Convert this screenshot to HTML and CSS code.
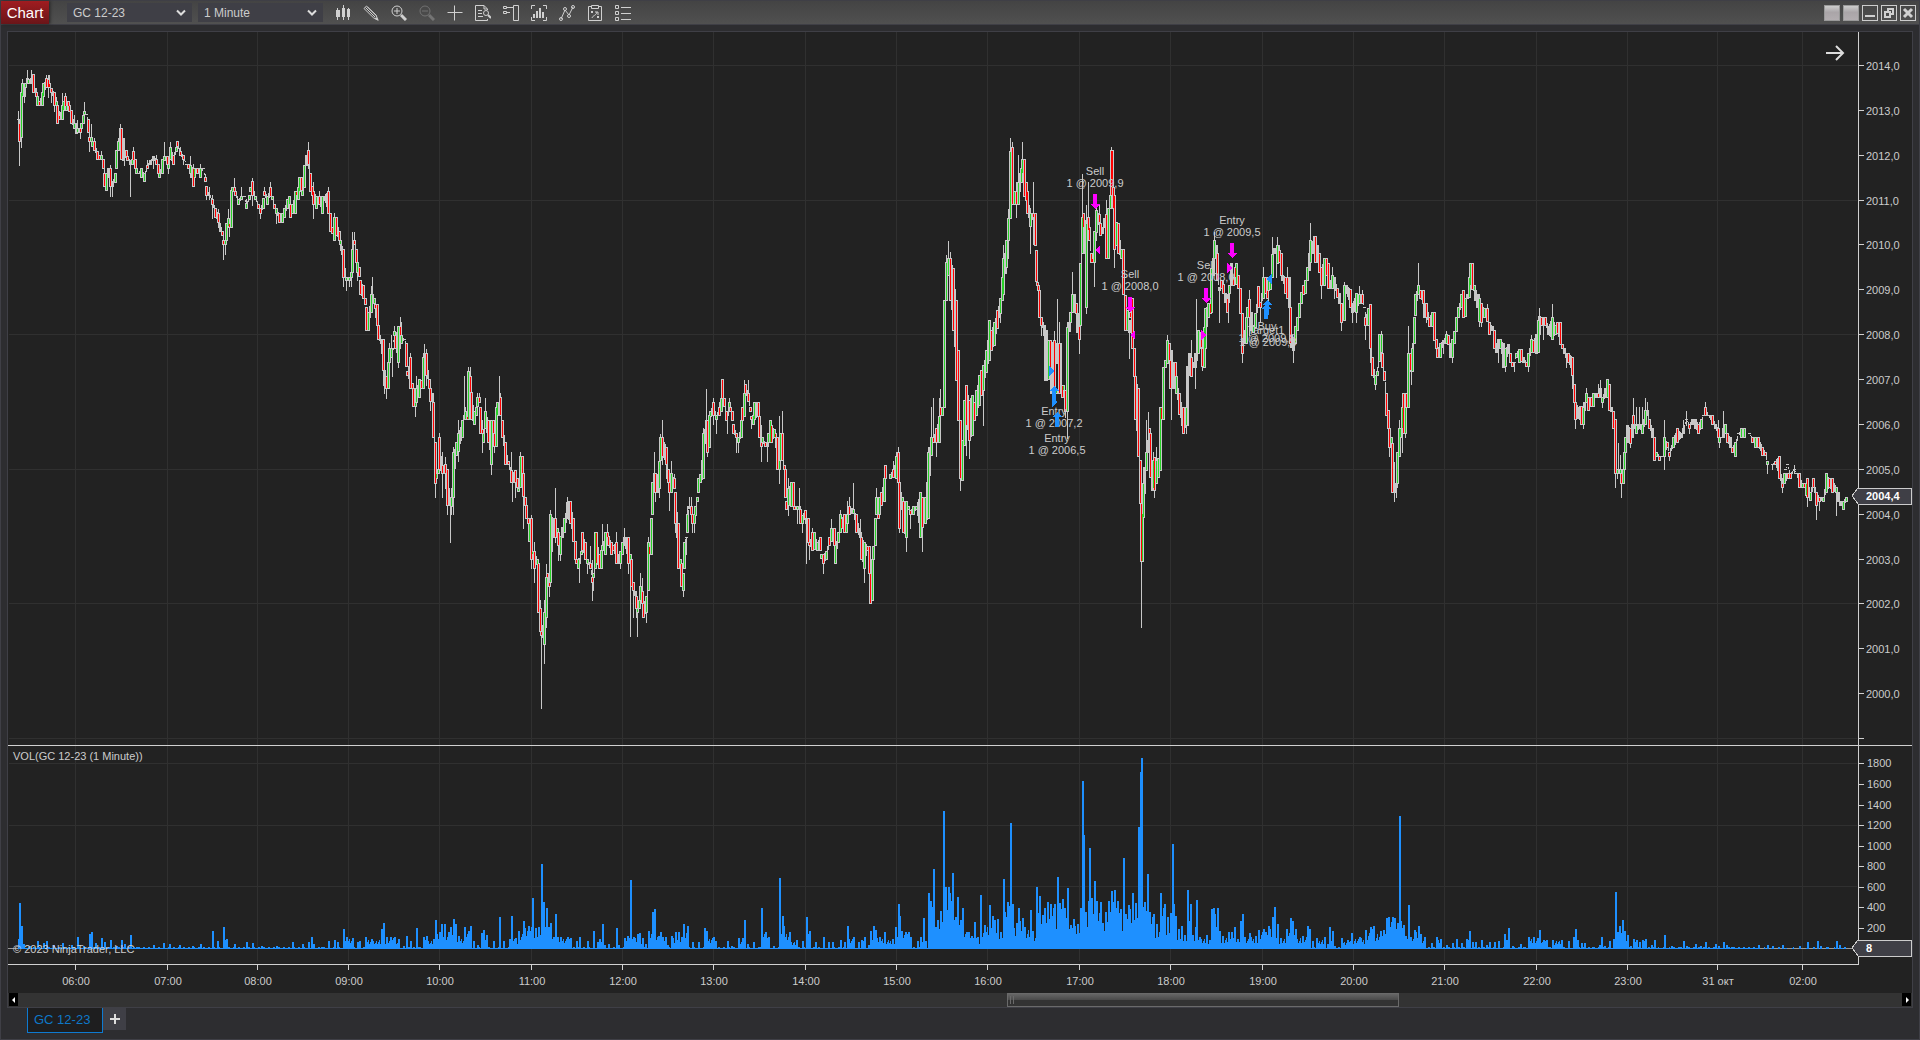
FILE: index.html
```html
<!DOCTYPE html>
<html lang="en">
<head>
    <meta charset="UTF-8">
    <meta name="viewport" content="width=device-width, initial-scale=1.0">
    <link rel="stylesheet" href="styles.css">
    <title>Chart</title>
</head>
<body>
    <div class="window">
        <header class="toolbar">
            <h1 class="title">Chart</h1>
            <label class="combo">
                <select name="instrument" aria-label="Instrument">
                    <option>GC 12-23</option>
                </select>
                <svg width="10" height="8" viewBox="0 0 10 8"><path d="M1 1.5 L5 5.5 L9 1.5"/></svg>
            </label>
            <label class="combo">
                <select name="interval" aria-label="Interval">
                    <option>1 Minute</option>
                </select>
                <svg width="10" height="8" viewBox="0 0 10 8"><path d="M1 1.5 L5 5.5 L9 1.5"/></svg>
            </label>
            <nav class="tools">
                <button type="button" title="Chart style">
                    <svg viewBox="0 0 16 16"><path class="solid" d="M1 5h4v7h-4zM2 3h1v12h-1zM7 3h3v9h-3zM8 0h1v15h-1zM12 4h3v8h-3zM13 3h1v12h-1z"/></svg>
                </button>
                <button type="button" title="Drawing tools">
                    <svg viewBox="0 0 16 16"><path d="M1 3.5L3.5 1L13 10L15 15L10.5 12.8ZM2.5 2.5L12 12M4.5 2L13 10.5"/><path class="solid" d="M13 12l3 4l-4-2z"/></svg>
                </button>
                <button type="button" title="Zoom in">
                    <svg viewBox="0 0 16 16"><circle cx="6" cy="6" r="5"/><path d="M3 6h6M6 3v6"/><path class="thick" d="M10 10L15 15"/></svg>
                </button>
                <button type="button" title="Zoom out" disabled>
                    <svg viewBox="0 0 16 16"><circle cx="6" cy="6" r="5"/><path d="M3 6h6"/><path class="thick" d="M10 10L15 15"/></svg>
                </button>
                <button type="button" title="Crosshair">
                    <svg viewBox="0 0 16 16"><path d="M0.5 7.5h15M7.5 0.5v15"/></svg>
                </button>
                <button type="button" title="Data box">
                    <svg viewBox="0 0 16 16"><path d="M12.5 5V4L9 0.5H0.5v15h12V14M9 0.5V4h3M3 5.5h4M3 8.5h4M3 11.5h5"/><circle cx="11" cy="8" r="2.5"/><path d="M13 10l3 3" stroke-width="2"/></svg>
                </button>
                <button type="button" title="Chart trader">
                    <svg viewBox="0 0 16 16"><path d="M0.5 1.5h3v2h-3zM0.5 6.5h3v2h-3zM10.5 0.5h5v15h-5zM4 2.5h6M4 7.5h3"/></svg>
                </button>
                <button type="button" title="Indicators">
                    <svg viewBox="0 0 16 16"><path d="M4 0.5H0.5V4M12 0.5h3.5V4M4 15.5H0.5V12M12 15.5h3.5V12"/><path class="solid" d="M2 9h2v4h-2zM5 6h2v7h-2zM8 3h2v10h-2zM11 7h2v6h-2z"/></svg>
                </button>
                <button type="button" title="Strategies">
                    <svg viewBox="0 0 16 16"><path d="M2 14L6 5L10 10L14 2"/><circle cx="2" cy="14" r="1.5"/><circle cx="6" cy="4" r="1.5"/><circle cx="10" cy="11" r="1.5"/><circle cx="14" cy="2" r="1.5"/></svg>
                </button>
                <button type="button" title="Strategy performance">
                    <svg viewBox="0 0 16 16"><path d="M4 1.5H1.5v14h13v-14H12M4.5 0.5h7v3h-7zM4 6l2 2M6 6L4 8M10 11l2 2M12 11l-2 2M5 13c1-3 4-2 5-6M8 7h3v3"/></svg>
                </button>
                <button type="button" title="Properties">
                    <svg viewBox="0 0 16 16"><path d="M0.5 0.5h3v3h-3zM0.5 6.5h3v3h-3zM0.5 12.5h3v3h-3zM6 2.5h10M6 8.5h10M6 14.5h10"/></svg>
                </button>
            </nav>
            <div class="window-buttons">
                <button type="button" class="link-button" aria-label="Instrument link"></button>
                <button type="button" class="link-button" aria-label="Interval link"></button>
                <button type="button" aria-label="Minimize"><svg viewBox="0 0 14 14"><path class="solid" d="M2 9h10v2h-10z"/></svg></button>
                <button type="button" aria-label="Restore"><svg viewBox="0 0 14 14"><path stroke-width="2" d="M6 5V3h5v5H9M3 6h5v5H3z"/></svg></button>
                <button type="button" aria-label="Close"><svg viewBox="0 0 14 14"><path stroke-width="3" d="M3 3l8 8M11 3l-8 8"/></svg></button>
            </div>
        </header>
        <main class="frame">
            <div class="chart-area">
                <svg id="chart"></svg>
                <button type="button" class="go-last" aria-label="Go to last bar">
                    <svg width="19" height="16" viewBox="0 0 19 16"><path d="M0 8H17M10 1L17 8L10 15"/></svg>
                </button>
            </div>
            <div class="scrollbar">
                <button type="button" aria-label="Scroll left"><svg width="4" height="6" viewBox="0 0 4 6"><path d="M3 0v6L0 3z"/></svg></button>
                <div class="track"><div class="thumb"></div></div>
                <button type="button" aria-label="Scroll right"><svg width="4" height="6" viewBox="0 0 4 6"><path d="M1 0v6L4 3z"/></svg></button>
            </div>
        </main>
        <footer class="tabs">
            <a class="tab" href="#chart">GC 12-23</a>
            <button type="button" class="add-tab" aria-label="New tab"><svg width="10" height="10" viewBox="0 0 10 10"><path d="M0 5h10M5 0v10"/></svg></button>
        </footer>
    </div>
    <script src="chart.js"></script>
</body>
</html>
```

FILE: styles.css
```css
* {
    box-sizing: border-box;
}

body {
    margin: 0;
    background: #2d2d30;
    color: #ccc;
    font-family: "Liberation Sans", Arial, sans-serif;
    font-size: 12px;
}

button {
    margin: 0;
    padding: 0;
    border: 0;
    background: none;
    color: inherit;
}

.window {
    display: flex;
    flex-direction: column;
    height: 100vh;
    border: 1px solid #3f3f46;
}

/* Toolbar */
.toolbar {
    display: flex;
    align-items: center;
    gap: 6px;
    height: 24px;
    padding-right: 3px;
    border-bottom: 1px solid #3f3f46;
    background: linear-gradient(#444, #505050);
}

.title {
    width: 48px;
    height: 23px;
    margin: 0 12px 0 0;
    background: linear-gradient(#a01c20, #6a1519);
    box-shadow: 1px 0 3px #222;
    color: #fff;
    font-size: 15px;
    font-weight: normal;
    line-height: 23px;
    text-align: center;
}

.combo {
    display: grid;
    align-items: center;
    width: 125px;
    height: 19px;
    background: #3f3f46;
}

.combo select,
.combo svg {
    grid-area: 1 / 1;
}

.combo select {
    width: 100%;
    height: 19px;
    padding: 0 6px;
    border: 0;
    appearance: none;
    background: none;
    color: #ccc;
    font: inherit;
}

.combo svg {
    justify-self: end;
    margin-right: 6px;
    fill: none;
    stroke: #ddd;
    stroke-width: 2;
    pointer-events: none;
}

.tools {
    display: flex;
    flex: 1;
}

.tools button {
    display: grid;
    place-items: center;
    width: 28px;
    height: 22px;
}

.tools svg,
.window-buttons svg {
    width: 16px;
    height: 16px;
    fill: none;
    stroke: #d0d0d0;
}

.tools button:disabled {
    opacity: 0.3;
}

.tools .solid,
.window-buttons .solid {
    fill: #d0d0d0;
    stroke: none;
}

.tools .thick {
    stroke-width: 3;
}

.window-buttons {
    display: flex;
    gap: 3px;
}

.window-buttons button {
    display: grid;
    place-items: center;
    width: 16px;
    height: 16px;
    border: 1px solid #ccc;
}

.window-buttons svg {
    width: 14px;
    height: 14px;
}

.window-buttons .link-button {
    border-color: #999;
    background: linear-gradient(#ccc, #aaa5a8 45%, #b2adb0);
}

/* Chart */
.frame {
    display: flex;
    flex: 1;
    flex-direction: column;
    min-height: 0;
    margin: 6px 6px 0;
    border: 1px solid #3f3f46;
    background: #222;
}

.chart-area {
    position: relative;
    flex: 1;
    min-height: 0;
}

#chart {
    display: block;
    width: 100%;
    height: 100%;
    font-size: 11px;
    shape-rendering: crispEdges;
}

#chart text {
    fill: #ccc;
}

#chart .middle {
    text-anchor: middle;
}

#chart .tag-text {
    fill: #fff;
    font-weight: bold;
}

.grid { fill: #303030; }
.axis { fill: #d0d0d0; }
.zero { fill: #999; }
.outline { fill: #c8c8c8; }
.down { fill: #f00; }
.up { fill: #28d228; }
.volume { fill: #1e90ff; }
.short { fill: #f0f; }
.long { fill: #1e90ff; }

.tag {
    fill: #3f3f46;
    stroke: #ccc;
}

.go-last {
    position: absolute;
    top: 13px;
    right: 67px;
    height: 16px;
}

.go-last svg {
    display: block;
    fill: none;
    stroke: #ddd;
    stroke-width: 2;
}

/* Scrollbar */
.scrollbar {
    display: flex;
    height: 14px;
    padding: 0 1px 1px;
    background: #333;
}

.scrollbar button {
    display: grid;
    place-items: center;
    width: 9px;
    background: #000;
    fill: #fff;
}

.track {
    flex: 1;
}

.thumb {
    width: 20.8%;
    height: 14px;
    margin-left: 52.5%;
    border: 1px solid #6a6a6a;
    background:
        linear-gradient(90deg, transparent 2px, #6a6a6a 2px 3px, transparent 3px 5px, #6a6a6a 5px 6px, transparent 6px) 0 2px / 100% 8px no-repeat,
        linear-gradient(#666, #4a4a4a 50%, #333 50%);
}

/* Tabs */
.tabs {
    display: flex;
    height: 31px;
    padding-left: 26px;
}

.tab {
    width: 76px;
    height: 25px;
    padding-left: 6px;
    border: 1px solid #0e7ad1;
    border-top: 0;
    background: #1e1e1f;
    color: #0e78c8;
    font-size: 13px;
    line-height: 23px;
    text-decoration: none;
}

.add-tab {
    display: grid;
    place-items: center;
    width: 23px;
    height: 22px;
    background: #3f3f46;
    stroke: #ddd;
    stroke-width: 2;
}
```

FILE: chart.js
```js
// Base size of the drawing area; everything is scaled from it
const BASE_WIDTH = 1904;
const BASE_HEIGHT = 961;
const AXIS_WIDTH = 53;
const LEFT = 8;
const TOP = 32;

// Bars: x, body top, body bottom, direction, wick top, wick bottom (- = no wick)
const segments = [
    { x: 0, y: 60, scaleX: 3, scaleY: 3, bars: `
55 178 178 n 153 190|58 190 243 r 178 315|65 97 232 g - 260|68 70 108 g 57|74 70 108 n - 125|76 70 80 g|83 55 70 n 30|86 56 68 g|94 55 70 n 30|100 43 96 r|106 83 96 n|109 96 108 r 84|113 108 135 g 97|118 124 135 r|127 96 135 g 84|131 70 108 g|139 55 81 r 45|145 56 81 r 45 110|148 70 82 r 45|154 83 96 r - 125|163 97 135 r - 152|169 123 136 g 112|173 136 190 r|179 165 178 r 153|187 136 178 g 98|190 124 150 g|196 109 137 r 98|199 136 150 g|205 124 137 r|208 136 152 r|214 151 190 r|223 190 204 g 165|229 190 218 n|233 204 216 g 180|241 204 216 r 190 233|244 190 204 g|250 165 190 g|254 152 163 g 126|260 163 163 n|265 178 217 r|268 232 244 r 190 272|274 232 244 g 192|278 244 259 g|283 244 270 r 235|293 272 297 r|299 285 298 r|305 285 297 g 272|310 298 325 r|314 340 378 r 325|319 340 391 g|326 325 350 n|330 325 378 r 315 407|337 364 379 n - 407|346 340 365 g|350 270 325 g|355 244 270 g 235|361 205 240 n 192|364 205 297 r|370 235 300 n|373 285 290 n - 315|379 271 287 r|382 287 300 r|391 300 313 n - 408|397 297 312 g 285|400 272 299 r 262|406 298 325 r|409 325 339 g|416 339 339 n|424 325 350 g|433 340 364 g|443 315 324 r 300|451 300 312 n|460 287 300 n - 325|469 298 312 r 285|475 312 340 r|478 340 352 g|487 297 339 g|493 287 300 g 246|502 287 312 r|505 313 325 g - 340|511 260 297 g 246|520 285 312 r|529 260 272 g|532 244 258 r|541 272 286 r 260|550 286 298 r - 312|559 312 312 n|565 313 325 r|572 315 340 g 288 352|580 325 378 r 312|583 325 350 g|592 325 340 r|600 325 350 g 312|610 325 325 n|617 352 364 r 342|619 379 405 r - 418|628 405 405 n 380 418|637 418 432 r 405 473|646 445 471 r|655 460 486 r 447 500|661 500 514 n 488|667 514 526 r|671 540 553 r 525 597|676 540 552 g - 582|679 488 540 g|686 473 498 g 447|688 488 500 r - 527|694 390 500 g|697 380 392 g|703 380 392 r 354|706 392 404 r|715 418 432 g|724 407 417 g 380|733 407 407 n|740 430 445 g 418|748 405 418 g|751 380 392 g|757 364 405 r 354 434|766 407 418 g|775 433 445 r|782 445 460 r - 473|790 415 445 g|794 392 405 r 380|802 407 432 g|811 380 407 r 366|817 407 418 g|823 432 444 r|829 445 460 g - 488|838 460 487 r|848 460 487 g|854 445 472 g|862 418 445 g|868 407 432 g|872 433 472 r|878 433 460 g|886 392 460 g|890 392 405 r|895 380 418 g|899 352 392 g|905 352 390 r|908 390 405 g|914 314 380 g|920 285 314 n|925 271 313 r 246 325|931 340 392 r|937 378 405 r|941 392 432 r 366 473|950 407 444 g|958 407 432 r 392|967 407 460 g|974 407 420 n|985 392 460 r 380|991 460 514 r|996 500 520 r|1003 472 541 g 460|1010 472 526 r|1018 514 540 r|1021 541 553 g - 570|1030 568 650 r - 678|1039 650 660 g - 690|1048 650 660 g - 678|1054 635 650 g - 678|1057 568 635 g 515|1063 541 552 r 515|1069 568 607 r|1072 607 635 g - 660|1078 622 648 r|1081 660 703 r|1090 676 715 r|1096 715 731 r|1099 742 810 r|1106 757 810 g|1114 703 757 g 678|1117 703 715 n 650|1124 715 730 g|1126 731 743 r - 770|1132 731 796 r|1135 796 838 r|1144 838 850 n - 878|1150 838 930 r|1153 930 975 n - 998|1159 947 985 r - 1013|1165 905 985 g|1168 865 905 g 850|1175 865 892 g 825|1178 865 868 n - 948|1184 812 824 g 797|1187 824 865 r|1195 797 905 g - 920|1201 797 824 r 770 865|1205 824 850 g 785|1213 838 838 n|1219 850 918 r|1222 933 945 r|1231 892 985 r 880|1237 970 985 r|1240 985 1038 r|1247 1025 1038 g - 1067|1250 985 1025 g 947|1258 958 1010 g|1264 960 984 r|1270 892 985 g|1273 878 890 n 852|1279 878 945 r 868 975|1288 958 985 r|1291 985 1023 r - 1050|1297 1000 1023 n|1300 1025 1132 r|1306 1147 1268 r - 1310|1310 1240 1255 g|1316 1228 1240 g|1319 1132 1228 r 1120|1327 1215 1240 r 1177 1310|1336 1213 1240 r 1190 1283|1342 1228 1335 r - 1363` },
    { x: 450, y: 340, scaleX: 3, scaleY: 3, bars: `
1 470 495 n - 605|4 470 497 g 445 523|11 335 470 g 322 523|19 307 345 g|26 280 333 g 240 362|37 240 292 g|43 225 238 n 108|47 212 238 g 200|52 227 238 r|56 92 238 g 81|62 107 157 r 81|65 157 238 r|73 212 252 g|80 200 225 g|83 172 198 g 160|89 172 185 r 160|91 200 280 r|97 267 280 r 240 335|100 280 307 g|106 212 265 g 175|115 240 307 r|124 240 373 g - 402|130 240 280 r|134 280 318 r - 335|139 200 318 g|143 185 225 g|149 185 200 n 108|152 172 225 r 160|157 240 292 r|166 307 373 r|175 362 373 r|184 390 427 r 337|187 400 427 n - 482|196 390 427 r - 470|202 415 440 r|206 443 454 g|211 347 440 g 337|217 347 400 r|220 400 468 r - 563|226 470 496 r|230 496 535 r|235 535 548 r|238 550 603 g|244 535 658 r 525 685|247 632 643 g|253 632 685 r 607 725|262 658 672 g|265 670 817 r|271 805 872 r 780|274 872 885 r - 1103|283 817 912 g 780 968|289 712 832 g 672 860|293 698 712 r|298 725 738 r - 767|301 523 725 g 510|310 535 590 n|316 535 590 r 443 605|322 563 577 g|326 577 615 r - 660|331 588 643 g - 660|337 560 590 n|343 535 577 g|352 485 535 n 472|361 482 548 r|370 535 603 r|376 603 658 r|379 658 670 r|385 658 685 g|388 655 668 n - 725|394 632 643 g|397 577 630 r|406 605 658 r|413 658 670 g - 698|421 670 685 r 618|428 712 725 r 660 780|431 698 712 g - 750|437 577 685 g|440 577 670 r|447 643 685 r|455 630 685 g|457 615 630 g 552|466 577 643 g|472 577 590 r 552|475 588 615 r|484 605 643 r|490 615 630 r|499 605 670 r 577|504 643 670 n|511 632 670 g - 685|517 605 643 g|523 590 615 n 563|535 590 668 r - 698|541 643 658 g - 887|545 658 738 r|550 725 750 r - 832|559 767 805 r 752 832|562 805 817 g - 887|568 780 805 g|572 738 780 g 698|578 752 790 r 715|581 790 832 r|589 767 817 g - 845|595 605 750 g 590|598 617 643 r|604 535 643 g|607 427 523 g|613 400 427 n 335|616 400 455 r - 482|622 402 455 n|628 362 443 g - 470|631 292 360 g 282|637 292 347 r 240 373|649 320 373 r - 415|655 388 427 r|659 427 455 r - 510|664 400 455 g 362|673 415 443 r 402|676 455 548 r - 577|685 548 685 r|691 658 672 g|694 670 738 r|700 698 750 g - 767|703 605 685 g|709 590 590 n - 643|712 523 577 g 497|718 497 503 n 472|724 497 523 r 472|727 523 548 r - 577|733 523 548 g - 577|736 497 525 g|742 470 482 g|745 415 455 g|751 402 427 g|760 280 415 g 265|769 240 260 n 147|772 240 335 r - 347|778 225 320 g|782 212 227 g|790 185 225 r 175 252|799 225 238 g - 280|808 200 225 r 187|814 173 212 g|817 118 173 r|823 173 198 r|829 212 240 r|832 212 225 n - 280|838 187 200 g 175|841 200 212 r|847 212 240 r|850 252 280 r|859 280 292 r - 335|866 292 307 g - 335|874 240 292 g|877 200 240 r|883 160 227 g 120|886 133 160 r|895 158 183 r 120|901 200 212 r|904 227 238 r - 265|911 225 252 g|914 185 238 g|925 185 227 r|928 227 292 r|934 305 318 r 255 362|937 292 307 g|946 307 318 r|952 305 318 n - 362|955 280 305 g|961 240 305 g|965 255 305 r|973 267 292 g|976 280 290 r - 320|982 292 388 r|988 360 388 g 227 428|991 280 360 g|997 280 360 r 213|1002 375 388 r|1006 388 470 r|1009 482 508 r|1016 443 495 g 415 525|1025 427 497 g|1030 427 497 r|1033 497 508 r|1041 497 508 g - 550|1048 497 508 n 443|1051 508 550 r|1057 525 548 g - 577|1066 510 535 r|1069 535 550 n - 670|1075 535 605 r|1078 605 615 r - 658|1088 577 630 r 563|1093 577 628 g|1102 605 630 g|1111 590 630 r|1115 643 655 g|1120 643 670 r - 698|1130 632 658 g|1139 590 615 r|1145 563 603 g 537|1153 563 615 r|1156 615 670 g|1165 577 605 g|1172 523 577 g 510|1174 535 563 r|1183 523 577 r|1190 550 577 g|1192 523 548 g 482|1199 497 523 r 470|1210 508 520 g 430|1219 523 577 r|1231 577 590 n 537|1234 590 658 r|1243 605 685 g - 725|1252 617 630 r|1258 617 700 r|1261 700 790 r|1267 658 780 g|1270 617 658 g|1276 535 615 g|1279 470 523 g 443|1285 523 535 r|1288 470 523 g|1294 455 495 r|1303 415 482 g|1306 375 415 r|1321 402 415 g|1330 388 412 r 362|1339 347 415 g 335|1345 335 427 r 320|1348 427 563 r - 577|1357 470 483 g|1361 482 577 r|1369 482 590 g - 632|1375 497 508 g|1381 510 522 r - 563|1390 497 522 g|1399 497 508 g|1411 455 590 g|1417 470 560 r - 632|1426 470 548 g|1435 335 535 g 320|1443 292 345 g 200|1450 292 305 r 175|1460 265 305 r - 347|1468 227 305 g 175|1471 200 225 r 148|1477 200 225 g` },
    { x: 0, y: 0, scaleX: 1, scaleY: 1, bars: `
944 300 407 g|946 262 300 g 255|948 258 275 g 241|950 258 300 r 252|953 268 330 r|956 300 380 r|958 350 420 r|960 420 478 r - 490|962 440 480 g|964 400 445 g|966 385 425 r - 455|969 400 440 r - 458|972 395 435 g|974 402 420 r|976 390 415 g|979 375 405 g|981 370 395 r|983 365 390 g - 425|986 350 372 g|989 320 360 g|991 330 350 r|994 322 345 g|997 310 328 r` },
    { x: 1000, y: 130, scaleX: 3, scaleY: 3, bars: `
2 505 550 g - 575|8 440 510 g|11 385 492 g 345|17 370 430 n|20 330 412 g|25 265 330 g 238 385|32 62 265 g 24|37 50 222 r 36|42 182 222 g|49 182 222 r 155 262|55 155 222 g 75|58 130 182 n|64 115 157 g|67 87 130 g 36|73 87 197 r|79 157 210 r|83 182 250 r|91 248 288 g 235 370|99 250 262 r 155 342|106 250 344 r|109 360 452 r|112 455 464 r|115 464 480 r|119 480 560 r|125 560 585 r - 615|133 585 615 n - 750|139 600 750 n|146 630 748 g|151 630 735 r|155 640 790 n|164 630 780 r 603|168 780 790 g|172 640 700 n 508|178 640 790 r 577|182 640 770 n|187 765 802 r|190 765 780 g|196 780 842 r - 860|203 590 842 g 577 925|208 577 603 n|212 545 577 g|218 492 545 g 427|224 492 545 n|229 520 548 r|233 548 605 n|238 588 627 r - 668|242 400 585 g|248 262 370 g 132|251 250 290 r|260 278 532 g 225 548|265 262 300 r 155|269 290 330 r|274 370 395 r|278 385 395 r|282 304 395 g - 467|290 240 305 g 225 330|299 252 275 r 225|301 278 315 r|307 290 308 n|313 265 290 n|320 252 384 r 210|326 235 384 g|332 195 235 g|335 60 195 r 50|337 60 170 r|340 170 235 r|344 195 358 r - 412|349 275 345 g|355 278 370 r|364 358 385 g|370 358 492 r|376 495 600 r|382 540 600 g|387 570 605 n - 683|391 545 560 r|397 505 655 r|403 655 738 r|406 738 868 r|415 775 977 r|421 990 1120 r|424 1120 1293 r - 1491|427 1150 1293 g|430 1060 1160 g|434 1010 1090 n|440 965 1020 g 870|445 930 965 n 845|448 895 910 r|452 910 1040 r|456 1000 1080 n|460 990 1075 g 965|464 980 1080 r - 1100|470 990 1060 g 950|475 985 1040 g|478 985 1020 n|482 830 1020 g|485 830 868 r|490 710 868 g|496 690 710 g|502 630 700 g 615|508 640 690 r|512 690 775 r|515 660 775 n - 868|520 695 775 n|526 695 738 r|529 738 790 g|537 790 852 r|546 830 885 n - 910|550 830 908 r|559 830 885 g - 910|562 708 885 n|568 670 735 n|575 680 738 r 630|580 695 710 n|587 670 712 n - 775|590 670 690 n 508|595 600 670 g|604 610 650 r|608 655 708 r - 720|614 590 710 g|617 535 655 g|625 520 560 g|631 520 550 r|634 415 545 g|640 385 435 n|644 330 385 g 305|650 345 370 n|653 370 450 r|658 470 480 n - 575|664 450 475 r|670 463 490 r 450|676 490 515 n|682 505 545 r|685 492 515 n - 575|688 465 490 g|694 400 465 n|700 440 465 r|706 412 440 r|710 398 462 g|715 435 475 r|721 475 548 r|727 548 668 r - 695|733 600 640 n|740 560 640 g|742 530 560 g|747 507 560 r 480 615|753 545 600 n|760 585 605 g|766 548 590 g|775 467 530 r|781 515 530 r - 575|790 440 505 g 412|796 440 490 r|802 480 505 r|805 440 480 g - 535|811 440 478 g|817 372 440 g 320|823 355 370 n|829 358 370 n - 440|832 345 400 g 320|838 360 397 r 345|844 370 435 r|847 435 450 n|855 440 490 r|860 455 480 n|862 440 505 r 412|868 440 530 n|872 530 640 r|875 615 650 n|880 628 660 n - 695|887 587 640 g|892 560 600 g|899 520 560 g|903 485 520 g|910 465 492 r|916 450 490 g|922 410 450 g|928 370 420 n|931 330 395 g 280|937 332 370 n|943 318 330 n|946 318 395 r|952 345 395 n|958 370 425 r|964 410 465 r - 505|973 385 465 g|978 385 435 r|985 400 475 r|991 450 475 n|997 435 475 g 410|1003 440 475 n - 505|1012 475 500 r|1018 490 520 n|1024 520 575 r - 600|1028 520 555 n|1034 465 570 g 455|1040 465 490 n|1050 478 530 r|1057 520 545 n - 575|1068 490 545 g - 575` },
    { x: 1300, y: 200, scaleX: 2.703, scaleY: 3, bars: `
162 283 310 g 258|168 283 310 r 270|173 322 322 n|178 350 375 r 337 418|184 325 375 g|190 312 445 r - 486|197 472 525 r|204 525 553 g - 566|210 512 525 g 500|216 403 483 g|219 403 455 g 392|224 458 500 r|228 512 540 r|233 578 645 r|238 630 685 r|243 685 740 r - 767|247 712 728 g|250 728 875 r|255 850 875 n 785 902|261 848 862 n - 890|264 755 848 g|268 685 767 g 660|273 685 712 g|276 620 685 g - 755|281 578 700 r|285 620 700 g - 712|289 578 620 r|293 458 620 g 378|298 458 510 r|301 485 512 n - 553|304 445 512 g 430|309 350 430 g|313 283 345 g|320 256 283 g 190|327 270 295 r|333 270 310 r|337 310 350 n|343 310 350 r - 365|350 350 377 r|358 337 377 g|363 337 420 r|369 418 445 r|373 445 472 r|380 430 470 g|388 420 430 n - 458|396 403 430 g 392|402 405 432 r|407 430 470 n|412 418 472 g - 486|418 392 430 g|424 350 392 g|429 322 350 g|436 283 320 g|441 270 350 r|448 295 348 g|453 283 295 n|458 230 290 g|462 188 256 g|466 188 268 r|472 256 270 g|475 270 300 n|481 283 320 n|485 295 362 g 283 377|491 310 365 r - 377|498 325 350 g|507 325 362 r 312|512 365 402 r|519 378 390 n|525 390 445 r|531 430 455 n|537 418 445 n - 486|541 418 445 g|550 430 500 n|555 445 498 g - 512|563 432 458 n|569 458 485 r|575 485 498 r|580 485 485 n - 512|586 458 470 g|592 447 485 g|598 447 483 r|605 470 485 n|612 485 498 r|617 458 498 g - 512|625 418 455 g 405|632 420 455 r|639 403 458 n|645 360 455 g|648 348 403 n 325|653 350 375 r|659 350 375 n - 418|664 350 375 r|673 378 403 n|682 350 418 g 312|690 375 403 g|697 365 400 r|703 365 432 r|709 432 445 r|714 445 460 n|720 460 470 n - 500|727 458 485 r|737 472 525 r - 565|742 553 605 r|745 605 658 r - 685|752 620 655 n|760 618 672 r|766 620 672 g - 685|770 605 630 n|774 578 605 g 565|780 592 630 r|787 592 618 r|793 578 618 g|800 578 592 n|806 578 592 r 553|812 565 592 n 540|818 590 605 g - 620|826 565 592 n|831 538 592 g|836 553 630 r|843 620 632 n|848 632 685 r|852 658 820 r - 862|857 808 820 g - 835|861 808 820 n 728|865 808 820 g 765|870 820 848 r - 890|874 808 848 g|877 755 808 g|881 712 755 g|886 675 725 n|893 685 728 r - 740|898 672 712 n|901 646 672 r 594|905 672 685 n|909 674 698 g 620|917 672 685 n 620|926 672 698 g 620|934 630 672 g 594|939 630 646 n 606|946 658 685 r|952 685 712 n|957 712 780 r|964 755 767 g|972 767 780 r|980 767 767 n|986 712 767 g 660 808|993 727 740 r|1000 755 767 r - 780|1009 712 740 g|1020 685 727 r|1030 700 712 n|1036 685 700 n 660|1045 658 658 n 632 675|1052 672 685 r - 700|1060 658 672 n|1068 658 685 n|1077 672 700 r|1085 658 685 g|1091 646 646 n|1097 620 646 r 606|1104 646 646 n|1114 646 672 r|1124 672 685 n|1130 685 712 r 660|1133 712 727 g - 740|1140 712 712 n|1145 685 712 n 632|1150 672 700 g|1155 700 727 r|1163 712 740 n|1170 740 755 r|1177 727 767 g|1186 700 700 n|1193 685 712 g|1202 685 712 g|1214 700 700 n|1222 712 725 r|1231 712 740 g|1240 712 740 r|1250 740 765 r|1258 755 765 r|1265 782 793 g - 820|1276 793 793 n - 808|1286 782 793 r|1295 767 835 r|1304 848 862 r 835 875|1309 820 848 g|1320 820 835 r|1313 808 808 n|1318 793 793 n|1327 820 833 r|1336 808 808 n 795 820|1343 820 820 n|1350 820 860 r|1358 848 860 g|1363 848 860 r|1368 848 885 g|1372 835 890 r - 917|1381 875 900 g|1388 835 862 r|1397 875 915 r - 956|1404 890 902 r - 930|1414 890 902 g|1422 820 875 g|1430 835 862 r|1438 835 875 r|1451 862 877 g - 945|1456 877 902 n|1462 902 915 n|1469 902 927 g|1477 890 902 g` }
];

// Volume bars: x, height
const volumes = [
    { scale: 1, bars: `
19 10,20 46,22 23,24 5,30 3,38 8,44 6,47 8,54 4,63 6,72 4,78 12,84 3,90 15,92 17,96 6,102 11,105 7,111 9,117 3,122 9,125 5,131 14,137 2,154 4,164 6,170 5,180 4,193 3,201 5,213 18,218 8,224 22,227 10,235 5,247 7,253 6,262 3,277 3,293 7,303 5,309 7,312 12,314 5,322 2,329 8,335 9,338 7` },
    { scale: 0.83, bars: `
344 24,347 14,353 13,358 9,360 10,366 15,372 12,382 24,384 31,387 14,391 14,395 15,399 12,404 4,407 16,411 10,417 25,420 3,424 14,427 16,434 12,436 35,440 20,442 30,445 30,449 21,451 27,454 36,456 30,459 16,465 26,469 22,471 28,474 10,478 5,482 19,484 23,487 17,494 10,500 38,504 10,510 12,512 40,516 13,519 22,524 34,529 28,532 27,533 62,536 25,539 27,542 103,544 57,547 49,549 27,551 31,554 15,556 42,558 14,561 14,568 14,571 13,577 10,580 14,588 10,594 22,598 9,600 12,603 30,605 5,609 6,617 25,619 5,625 13,628 16,631 83,634 14,638 18,640 19,643 13,646 6,649 22,653 44,655 48,659 16,661 20,663 15,666 14,668 5,672 16,676 20,679 21,682 14,684 30,688 28,693 8,699 9,705 25,707 22,714 14,716 10,728 10,732 4,739 13,743 13,745 35,748 6,754 8,760 2,762 49,766 20,769 14,774 4,780 86,783 40,784 28,790 21,797 11,803 10,807 39,810 22,816 9,824 14,829 8,833 9,841 11,845 9,848 28,854 14,859 8,862 11,865 15,869 5,871 22,874 28,876 23,880 14,885 21,893 12,896 26,899 54,900 40,902 22,906 20,909 21,911 14,918 10,921 14,924 37,926 10,929 68,931 58,932 51,934 96,936 27,938 35,941 46,944 166,946 75,949 75,950 68,953 91,956 39,958 63,961 35,963 49,967 20` },
    { scale: 1, bars: `
969 17,972 13,975 27,978 12,981 54,985 24,990 44,993 33,995 29,998 30,1001 17,1004 70,1005 37,1008 47,1011 126,1013 45,1017 26,1019 41,1023 31,1025 22,1031 39,1033 18,1037 62,1038 36,1040 53,1043 34,1045 41,1048 47,1051 45,1055 45,1058 72,1060 46,1063 50,1065 41,1068 61,1071 24,1074 30,1078 25,1081 41,1083 168,1084 114,1086 37,1089 48,1090 101,1092 51,1095 68,1097 48,1101 47,1103 26,1106 37,1109 48,1112 58,1115 59,1118 48,1121 40,1124 91,1126 35,1129 44,1133 56,1136 46,1139 122,1141 177,1142 191,1143 42,1145 47,1148 75,1150 37,1154 35,1157 25,1161 56,1165 45,1168 32,1171 36,1173 105,1174 45,1176 33,1179 20,1182 23,1185 14,1188 59,1191 45,1193 14,1196 22,1197 49,1200 12,1207 14,1210 9,1212 40,1214 41,1218 41,1220 18,1223 13,1229 17,1232 17,1235 22,1238 10,1241 28,1243 35,1245 12,1250 16,1256 13,1259 19,1264 20,1266 17,1269 23,1273 32,1275 42,1278 25,1281 11,1287 20,1291 31,1293 28,1296 20,1303 13,1308 23,1310 20,1313 8,1317 11,1325 12,1328 5,1330 22,1333 18,1335 3,1342 11,1348 9,1352 16,1360 12,1366 19,1371 22,1374 23,1381 18,1384 19,1387 31,1389 32,1393 32,1395 31,1398 26,1400 133,1401 28,1404 24,1406 13,1409 44,1411 12,1415 19,1419 23,1421 15,1425 12,1432 6,1437 12,1441 10,1447 4,1453 6,1457 10,1462 6,1467 10,1470 18,1473 7,1476 7,1482 9,1487 4,1490 7,1495 7,1499 8,1505 15,1507 9,1509 21,1513 3,1521 5,1525 2,1529 12,1534 12,1538 11,1540 19,1544 9,1547 9,1550 2,1553 9,1562 9,1569 8,1574 12,1576 20,1578 9,1582 6,1585 6,1593 2,1600 4,1602 12,1605 3,1610 8,1614 10,1616 57,1618 17,1620 23,1623 29,1625 18,1628 14,1631 3,1634 10,1637 9,1640 7,1643 9,1646 10,1652 4,1655 9,1659 1,1665 14,1668 1,1672 3,1681 2,1684 8,1687 3,1696 5,1701 3,1706 7,1710 1,1716 5,1719 3,1724 7,1727 4,1732 2,1759 4,1768 4,1773 3,1783 4,1800 3,1808 7,1818 8,1821 3,1827 2,1837 8,1840 4,1845 2` }
];

const hours = [[75, '06:00'], [167, '07:00'], [257, '08:00'], [348, '09:00'], [439, '10:00'], [531, '11:00'], [622, '12:00'], [713, '13:00'], [805, '14:00'], [896, '15:00'], [987, '16:00'], [1079, '17:00'], [1170, '18:00'], [1262, '19:00'], [1353, '20:00'], [1444, '21:00'], [1536, '22:00'], [1627, '23:00'], [1717, '31 окт'], [1802, '02:00']];

const labels = [
    [1095, 175, 'Sell'], [1095, 187, '1 @ 2009,9'],
    [1130, 278, 'Sell'], [1130, 290, '1 @ 2008,0'],
    [1232, 224, 'Entry'], [1232, 236, '1 @ 2009,5'],
    [1206, 269, 'Sell'], [1206, 281, '1 @ 2008,0'],
    [1054, 415, 'Entry'], [1054, 427, '1 @ 2007,2'],
    [1057, 442, 'Entry'], [1057, 454, '1 @ 2006,5'],
    [1267, 330, 'Buy'], [1267, 342, '1 @ 2009,8'],
    [1266, 334, 'Target1'], [1268, 346, '1 @ 2009,3']
];
const downArrows = [[1095, 194], [1130, 297], [1232, 243], [1206, 288]];
const upArrows = [[1054, 386], [1057, 412], [1267, 300], [1266, 304]];
// x of the tip, y, side where the base is
const fills = [[1095, 250, 5, 'short'], [1130, 335, 5, 'short'], [1232, 268, -5, 'short'], [1206, 335, -5, 'short'], [1054, 371, -5, 'long'], [1057, 402, -5, 'long'], [1266, 279, 6, 'long']];

function draw() {
    const svg = document.getElementById('chart');
    const width = svg.clientWidth;
    const height = svg.clientHeight;
    const kx = (width - AXIS_WIDTH) / (BASE_WIDTH - AXIS_WIDTH);
    const ky = height / BASE_HEIGHT;
    const X = x => Math.round((x - LEFT) * kx);
    const Y = y => Math.round((y - TOP) * ky);
    const box = (x, y, w, h) => `M${x} ${y}h${w}v${h}h${-w}z`;
    const path = (cls, d) => `<path class="${cls}" d="${d}"/>`;
    const text = (x, y, str, cls) => `<text x="${x}" y="${y}" class="${cls || ''}">${str}</text>`;
    const axisX = X(1858);
    let html = '';

    // Grid
    let grid = '';
    hours.forEach(([x]) => grid += box(X(x), 0, 1, Y(961)));
    [65, 200, 334, 469, 603, 738, 763, 825, 886].forEach(y => grid += box(1, Y(y), axisX - 2, 1));
    html += path('grid', grid);

    // Volume
    html += path('zero', box(0, Y(948), axisX, 1));
    let vol = '';
    const points = volumes.flatMap(group => group.bars.trim().split(',').map(p => {
        const [x, h] = p.split(' ').map(Number);
        return [x, Math.round(h * group.scale)];
    }));
    points.forEach(([x, h], i) => {
        vol += box(X(x) - 1, Y(949 - h), 2, Y(949) - Y(949 - h));
        const next = points[i + 1];
        if (!next) return;
        const low = Math.min(h, next[1]);
        for (let px = x + 1; px < next[0]; px++) {
            const k = 0.45 + ((px * 37) % 11) / 22;
            const fillHeight = low < 9 ? (px % 5 < 3 ? 1 : 2) : Math.round(low * k);
            if (x > 1732 && px % 7 > 1) continue;
            vol += box(X(px), Y(949 - fillHeight), 1, fillHeight);
        }
    });
    html += path('volume', vol);

    // Candles
    let outline = '', up = '', down = '';
    let last = null;
    segments.forEach(seg => {
        seg.bars.trim().split('|').forEach(bar => {
            const p = bar.split(' ');
            const pos = v => seg.y + v / seg.scaleY;
            const x = Math.floor(seg.x + p[0] / seg.scaleX);
            const top = pos(+p[1]);
            const bottom = pos(+p[2]);
            const high = p[4] && p[4] !== '-' ? pos(+p[4]) : top;
            const low = p[5] ? pos(+p[5]) : bottom;
            const cx = X(x);
            const y1 = Y(top), y2 = Math.max(Y(bottom), y1);
            outline += box(cx - 1, y1, 3, y2 - y1 + 1);
            outline += box(cx, Y(high), 1, Y(low) - Y(high) + 1);
            if (y2 - y1 > 2) {
                const inner = box(cx, y1 + 1, 1, y2 - y1 - 1);
                if (p[3] === 'g') up += inner;
                if (p[3] === 'r') down += inner;
            }
            // minute bars hidden between two neighbours
            if (last && x - last.x > 1 && x - last.x < 5) {
                for (let px = last.x + 1; px < x; px++) {
                    const k = (px - last.x) / (x - last.x);
                    const t = Y(last.top + (top - last.top) * k);
                    const b = Y(last.bottom + (bottom - last.bottom) * k);
                    outline += box(X(px), t, 1, Math.max(b - t, 1));
                }
            }
            last = { x, top, bottom };
        });
    });
    html += path('outline', outline) + path('up', up) + path('down', down);

    // Trades
    labels.forEach(([x, y, str]) => html += text(X(x), Y(y), str, 'middle'));
    downArrows.forEach(([x, y]) => {
        html += path('short', `M${X(x) - 2} ${Y(y)}h4v10h3l-5 5l-5 -5h3z`);
    });
    upArrows.forEach(([x, y]) => {
        html += path('long', `M${X(x)} ${Y(y)}l5 5h-3v10h-4v-10h-3z`);
    });
    fills.forEach(([x, y, side, cls]) => {
        html += path(cls, `M${X(x)} ${Y(y)}l${side} -5v10z`);
    });

    // Axes
    let axis = box(axisX, 0, 1, Y(965)) + box(0, Y(964), axisX, 1) + box(0, Y(745), width, 1);
    hours.forEach(([x, label]) => {
        axis += box(X(x), Y(965), 1, 5);
        html += text(X(x) + 1, Y(985), label, 'middle');
    });
    for (let price = 2014; price >= 1999; price--) {
        const y = Y(65 + (2014 - price) * 44.87);
        axis += box(axisX, y, 6, 1);
        if (price > 1999) html += text(axisX + 8, y + 5, price + ',0');
    }
    for (let v = 1800; v > 0; v -= 200) {
        const y = Y(948.5 - v * 0.1028);
        axis += box(axisX, y, 6, 1);
        html += text(axisX + 9, y + 4, v);
    }
    html += path('axis', axis);

    [[496, '2004,4'], [948, '8']].forEach(([y, label]) => {
        html += path('tag', `M${axisX - 6} ${Y(y)}l6 -8H${width - 1}v16H${axisX}z`);
        html += text(axisX + 8, Y(y) + 4, label, 'tag-text');
    });

    html += text(5, Y(760), 'VOL(GC 12-23 (1 Minute))');
    html += text(5, Y(953), '© 2023 NinjaTrader, LLC');
    svg.innerHTML = html;
}

window.addEventListener('resize', draw);
draw();
```
